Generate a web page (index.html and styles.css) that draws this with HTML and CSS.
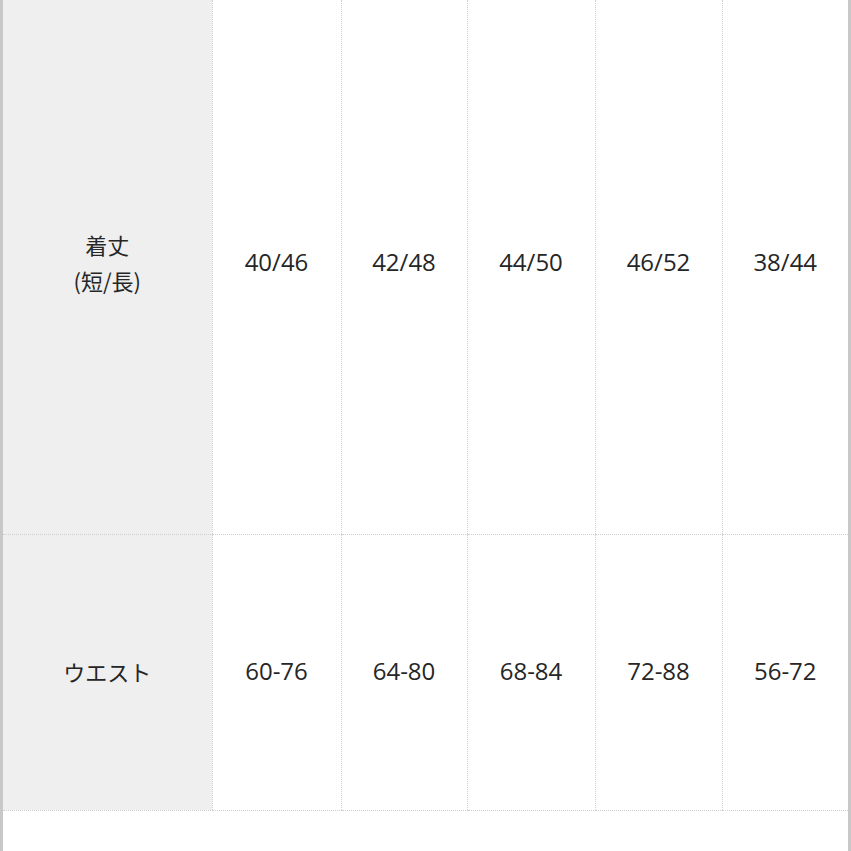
FILE: index.html
```html
<!DOCTYPE html>
<html lang="ja">
<head>
<meta charset="utf-8">
<link rel="stylesheet" href="styles.css">
</head>
<body>
<div class="frame">
  <table class="size-table">
    <colgroup>
      <col class="c-head">
      <col class="c1">
      <col class="c2">
      <col class="c3">
      <col class="c4">
      <col class="c5">
    </colgroup>
    <tbody>
      <tr class="row-tall">
        <th>着丈<br>(短/長)</th>
        <td>40/46</td>
        <td>42/48</td>
        <td>44/50</td>
        <td>46/52</td>
        <td>38/44</td>
      </tr>
      <tr class="row-mid">
        <th>ウエスト</th>
        <td>60-76</td>
        <td>64-80</td>
        <td>68-84</td>
        <td>72-88</td>
        <td>56-72</td>
      </tr>
      <tr class="row-end">
        <td class="blank"></td>
        <td class="blank"></td>
        <td class="blank"></td>
        <td class="blank"></td>
        <td class="blank"></td>
        <td class="blank"></td>
      </tr>
    </tbody>
  </table>
</div>
</body>
</html>
```

FILE: styles.css
```css
html, body {
  margin: 0;
  padding: 0;
  background: #ffffff;
}
.frame {
  width: 845px;
  height: 851px;
  overflow: hidden;
  border-left: 3px solid #c8c8c8;
  border-right: 3px solid #c8c8c8;
  background: #ffffff;
}
.size-table {
  width: 845px;
  table-layout: fixed;
  border-collapse: collapse;
  font-family: "Open Sans", "Noto Sans CJK JP", sans-serif;
  font-size: 24px;
  color: #262626;
}
.c-head { width: 209px; }
.c1 { width: 129px; }
.c2 { width: 126px; }
.c3 { width: 128px; }
.c4 { width: 127px; }
.c5 { width: 126px; }
.size-table th,
.size-table td {
  padding: 0;
  text-align: center;
  vertical-align: middle;
  border-left: 1px dotted #d0d0d0;
  border-bottom: 1px dotted #d0d0d0;
  line-height: 36px;
}
.size-table th {
  font-weight: normal;
  background: #efefef;
  border-left: none;
  font-family: "Noto Sans CJK JP", sans-serif;
  font-size: 22px;
}
.row-tall th,
.row-tall td {
  height: 534px;
  padding-bottom: 10px;
  box-sizing: border-box;
}
.row-mid th,
.row-mid td {
  height: 276px;
  padding-bottom: 2px;
  box-sizing: border-box;
}
.row-end td {
  height: 60px;
  border-bottom: none;
}
.row-end td.blank {
  border-left: none;
  background: #ffffff;
}
```
